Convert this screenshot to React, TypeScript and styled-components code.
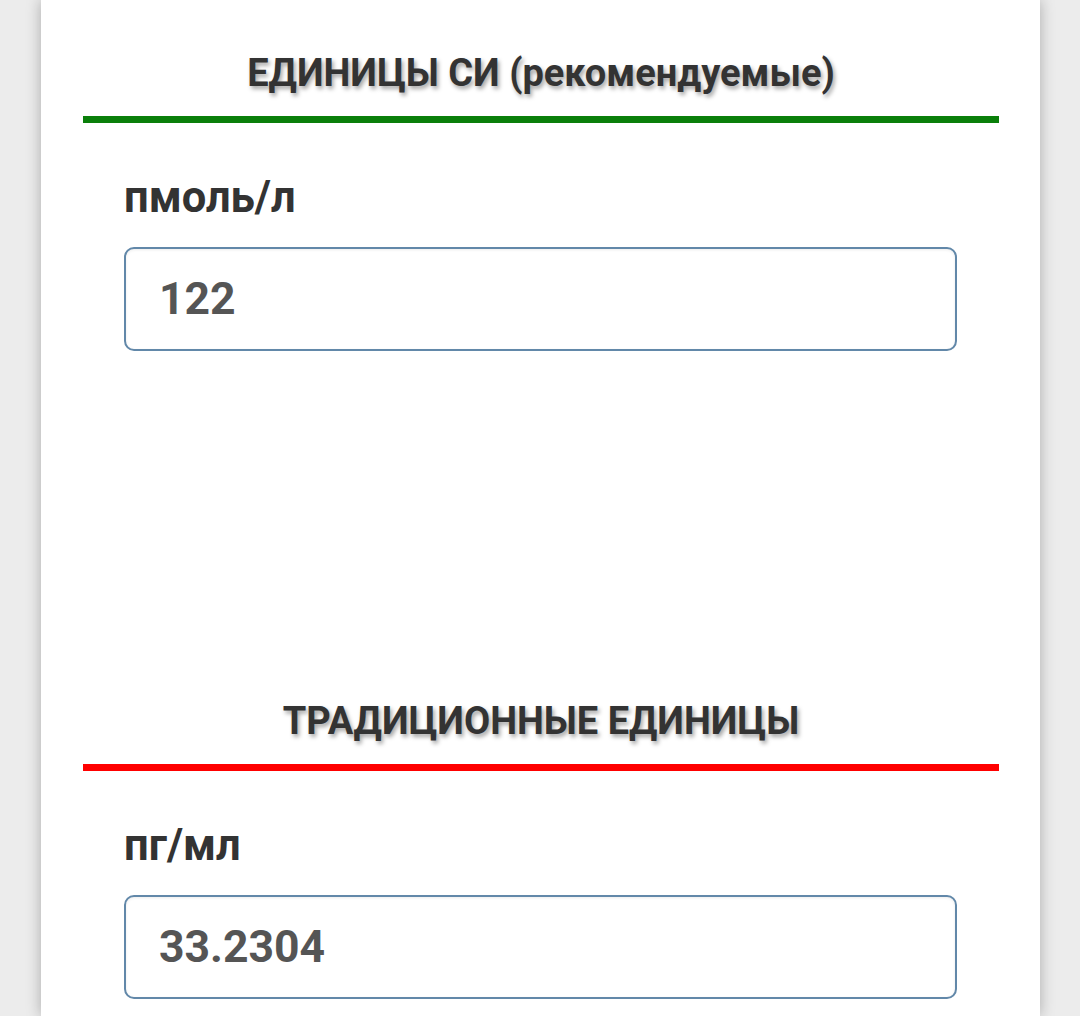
import React from "react";
import styled, { createGlobalStyle } from "styled-components";

const Global = createGlobalStyle`
  html, body { margin: 0; padding: 0; background: #ececec; }
  body { font-family: Roboto, "Liberation Sans", Arial, sans-serif; }
  * { box-sizing: border-box; }
`;

const Page = styled.div`
  display: flex;
  justify-content: flex-start;
  min-height: 100vh;
  padding-left: 41px;
  padding-right: 40px;
  overflow: hidden;
`;

const Card = styled.main`
  flex: 1;
  background: #ffffff;
  box-shadow: 0 0 14px rgba(0, 0, 0, 0.28);
  padding: 50px 41px 0 42px;
  min-height: 1016px;
`;

const Section = styled.section<{ $last?: boolean }>`
  display: flex;
  flex-direction: column;
  padding-bottom: ${(p) => (p.$last ? "0" : "347px")};
`;

const Heading = styled.h2`
  margin: 0;
  font-size: 38px;
  line-height: 46px;
  font-weight: 700;
  color: #333333;
  text-align: center;
  text-shadow: 2px 3px 4px rgba(0, 0, 0, 0.35);
`;

const Rule = styled.div<{ $color: string }>`
  height: 7px;
  margin-top: 20px;
  background: ${(p) => p.$color};
`;

const Field = styled.div`
  display: flex;
  flex-direction: column;
  padding: 49px 42px 0 41px;
`;

const Label = styled.label`
  font-size: 43.5px;
  line-height: 52px;
  font-weight: 700;
  color: #333333;
`;

const Input = styled.input`
  margin-top: 23px;
  height: 104px;
  width: 100%;
  border: 2px solid #6288a9;
  border-radius: 10px;
  box-shadow: inset 0 1px 3px rgba(0, 0, 0, 0.08);
  padding: 0 33px;
  font-family: Roboto, "Liberation Sans", Arial, sans-serif;
  font-size: 44.5px;
  font-weight: 700;
  color: #555555;
  background: #ffffff;
  outline: none;
`;

const blocks = [
  { title: "ЕДИНИЦЫ СИ (рекомендуемые)", color: "#0a7f0a", unit: "пмоль/л", value: "122" },
  { title: "ТРАДИЦИОННЫЕ ЕДИНИЦЫ", color: "#ff0000", unit: "пг/мл", value: "33.2304" },
];

export default function App() {
  return (
    <>
      <Global />
      <Page>
        <Card>
          {blocks.map((b, i) => (
            <Section key={b.title} $last={i === blocks.length - 1}>
              <Heading>{b.title}</Heading>
              <Rule $color={b.color} />
              <Field>
                <Label>{b.unit}</Label>
                <Input defaultValue={b.value} readOnly />
              </Field>
            </Section>
          ))}
        </Card>
      </Page>
    </>
  );
}
